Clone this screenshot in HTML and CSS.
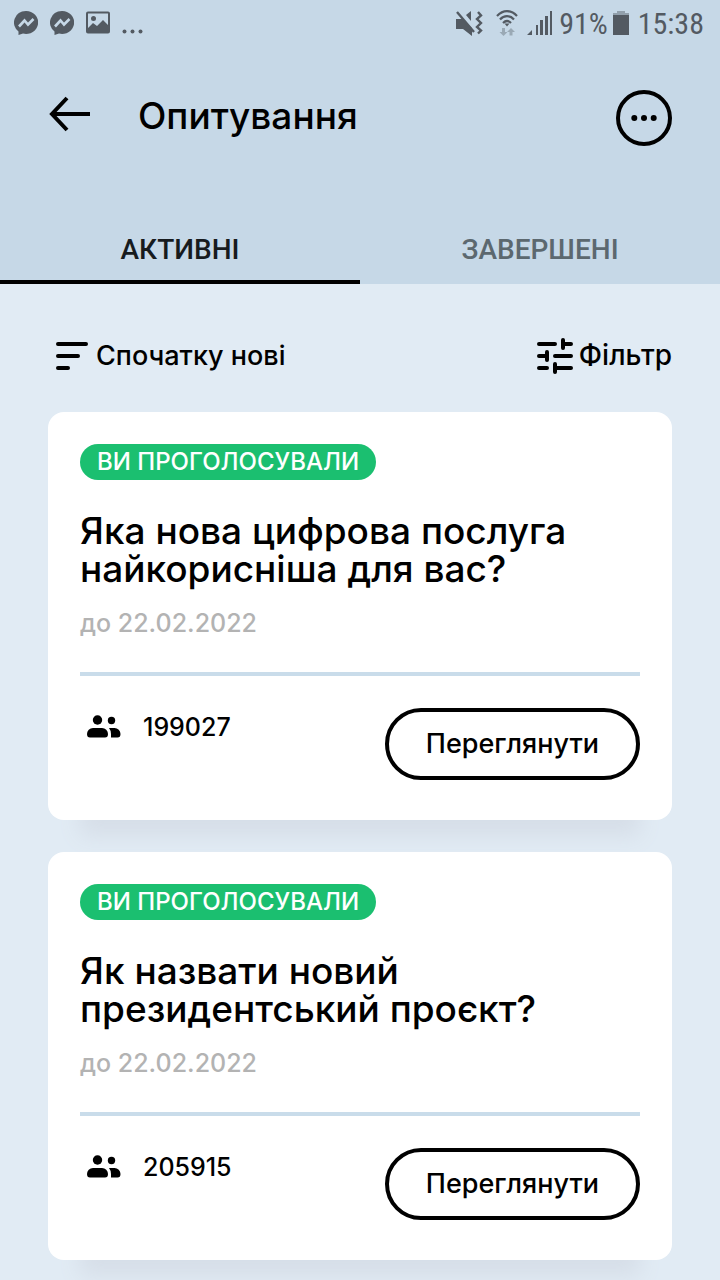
FILE: index.html
```html
<!DOCTYPE html>
<html lang="uk">
<head>
<meta charset="utf-8">
<meta name="viewport" content="width=device-width, initial-scale=1">
<title>Опитування</title>
<link rel="stylesheet" href="styles.css">
</head>
<body>
<div class="top">
  <div class="status">
    <div class="status-left">
      <svg width="24" height="24" viewBox="0 0 24 24"><path fill="currentColor" d="M12 0a12 11.500 0 1 1-3 22.600L4.500 24v-3.500A12 11.500 0 0 1 12 0z"/><path fill="none" stroke="#c6d8e7" stroke-width="2.600" d="M5 15.500l5.500-6 3.500 4 5.500-5.500"/></svg>
      <svg width="24" height="24" viewBox="0 0 24 24"><path fill="currentColor" d="M12 0a12 11.500 0 1 1-3 22.600L4.500 24v-3.500A12 11.500 0 0 1 12 0z"/><path fill="none" stroke="#c6d8e7" stroke-width="2.600" d="M5 15.500l5.500-6 3.500 4 5.500-5.500"/></svg>
      <svg width="24" height="24" viewBox="0 0 24 24"><rect x="1" y="1.500" width="22" height="20" rx="1" fill="none" stroke="currentColor" stroke-width="2"/><circle cx="7.500" cy="7.500" r="2.500" fill="currentColor"/><path fill="currentColor" d="M2 17l5-5 4 3 6-6 6 6v7H2z"/></svg>
      <svg width="24" height="24" viewBox="0 0 24 24"><circle cx="2.500" cy="20.500" r="2" fill="currentColor"/><circle cx="10.500" cy="20.500" r="2" fill="currentColor"/><circle cx="18.500" cy="20.500" r="2" fill="currentColor"/></svg>
    </div>
    <div class="status-right">
      <svg width="28" height="26" viewBox="0 0 28 26"><path fill="currentColor" d="M1 9h6l10 9v8l-9-7H1zM11 5l5-4v10z"/><path fill="none" stroke="currentColor" stroke-width="2.400" d="M2 2l17 20M23 2l3 3.500-4 3.500 4 4-4 4 4 3.500-3 3"/></svg>
      <svg class="wifi" width="24" height="26" viewBox="0 0 24 26"><path fill="none" stroke="currentColor" stroke-width="2.200" d="M2 6c6-6.500 14-6.500 20 0M5 9.500c4-4.500 10-4.500 14 0M8 13c2.500-2.500 5.500-2.500 8 0"/><path fill="currentColor" d="M9.500 13.500h5L12 16.500z"/><path fill="#9aa9b5" d="M7 18h3v4h2.500L8.500 26 4.500 22H7zM14.500 25.500h3V22H20l-4-4-4 4h2.500z"/></svg>
      <svg width="26" height="24" viewBox="0 0 26 24"><path fill="currentColor" d="M0 24l5-5v5zM9 14h2v10H9zM13 9h3v15h-3zM18 5h3v19h-3zM23 0h2v24h-2z"/></svg>
      <span>91%</span>
      <svg width="18" height="26" viewBox="0 0 18 26"><path fill="#92a0ac" d="M5 1h8v2h4v3H1V3h4z"/><path fill="currentColor" d="M1 5h16v20H1z"/></svg>
      <span>15:38</span>
    </div>
  </div>
  <header class="appbar">
    <button class="plain back" aria-label="Назад"><svg width="42" height="36" viewBox="0 0 42 36"><path fill="none" stroke="#000" stroke-width="4" d="M42 18H4M19 2L4 18l15 16"/></svg></button>
    <h1>Опитування</h1>
    <button class="plain more" aria-label="Меню"><svg width="56" height="56" viewBox="0 0 56 56"><circle cx="28" cy="28" r="26" fill="none" stroke="#000" stroke-width="4"/><circle cx="18.300" cy="28" r="3"/><circle cx="28" cy="28" r="3"/><circle cx="37.700" cy="28" r="3"/></svg></button>
  </header>
  <div class="tabs" role="tablist">
    <button class="tab active" role="tab" aria-selected="true">АКТИВНІ</button>
    <button class="tab" role="tab" aria-selected="false">ЗАВЕРШЕНІ</button>
  </div>
</div>
<main>
  <div class="tools">
    <button class="plain tool sort"><svg width="32" height="28" viewBox="0 0 32 28"><path stroke="#000" stroke-width="4" stroke-linecap="round" d="M2 2h28M2 14h20M2 26h10"/></svg><span>Спочатку нові</span></button>
    <button class="plain tool filter"><svg width="36" height="36" viewBox="0 0 36 36"><path stroke="#000" stroke-width="4" stroke-linecap="round" fill="none" d="M2 6h16M26 2v8M26 6h8M2 18h8M10 14v8M18 18h16M2 30h8M18 26v8M18 30h16"/></svg><span>Фільтр</span></button>
  </div>
  <article class="card">
    <span class="badge">ВИ ПРОГОЛОСУВАЛИ</span>
    <h2>Яка нова цифрова послуга найкорисніша для вас?</h2>
    <p class="date">до 22.02.2022</p>
    <div class="foot">
      <div class="votes"><svg width="34" height="24" viewBox="0 0 34 24"><circle cx="10.500" cy="5" r="4.700"/><circle cx="24.500" cy="5.500" r="3.700"/><path d="M6 13h9a6 6 0 0 1 6 6q0 3.500-3 3.500H3q-3 0-3-3.500a6 6 0 0 1 6-6zM22 13h5.500a6 6 0 0 1 6 6q0 3.500-3 3.500H24V19q0-3.500-2-6z"/></svg><span>199027</span></div>
      <button class="view">Переглянути</button>
    </div>
  </article>
  <article class="card">
    <span class="badge">ВИ ПРОГОЛОСУВАЛИ</span>
    <h2>Як назвати новий президентський проєкт?</h2>
    <p class="date">до 22.02.2022</p>
    <div class="foot">
      <div class="votes"><svg width="34" height="24" viewBox="0 0 34 24"><circle cx="10.500" cy="5" r="4.700"/><circle cx="24.500" cy="5.500" r="3.700"/><path d="M6 13h9a6 6 0 0 1 6 6q0 3.500-3 3.500H3q-3 0-3-3.500a6 6 0 0 1 6-6zM22 13h5.500a6 6 0 0 1 6 6q0 3.500-3 3.500H24V19q0-3.500-2-6z"/></svg><span>205915</span></div>
      <button class="view">Переглянути</button>
    </div>
  </article>
</main>
</body>
</html>
```
FILE: styles.css
```css
* { box-sizing: border-box; }
body { margin: 0; background: #e1ebf4; color: #000; font-family: Inter, "Noto Sans", sans-serif; font-weight: 500; }
svg { display: block; flex: none; }
h1, h2, p { margin: 0; font-weight: 500; }
button { font: inherit; color: inherit; cursor: pointer; }
.top { background: #c6d8e7; }
.status { display: flex; justify-content: space-between; align-items: center; height: 46px; padding: 0 16px 0 14px; color: #535a62; font-family: "Roboto Condensed", Roboto, sans-serif; font-size: 30px; font-weight: 400; }
.status-left { display: flex; gap: 12px; }
.status-right { display: flex; align-items: center; gap: 6px; }
.status-right svg:last-of-type { margin-left: -2px; margin-right: 2px; }
.wifi { margin: 0 2px 0 6px; }
.plain { border: 0; padding: 0; background: none; }
.appbar { display: flex; align-items: center; padding: 44px 48px 0; }
.back { padding-bottom: 8px; }
.appbar h1 { margin-left: 48px; padding-bottom: 4px; font-size: 37px; line-height: 44px; }
.more { margin-left: auto; }
.tabs { display: grid; grid-template-columns: 1fr 1fr; margin-top: 68px; font-family: Roboto, sans-serif; font-size: 28px; }
.tab { height: 70px; border: 0; border-bottom: 4px solid transparent; padding: 4px 0 0; background: none; color: #5c686f; }
.active { color: #171b1e; border-bottom-color: #000; }
main { display: flex; flex-direction: column; gap: 32px; padding: 52px 48px 20px; }
.tools { display: flex; justify-content: space-between; height: 44px; font-size: 27px; }
.tool { display: flex; align-items: center; gap: 6px; height: 40px; }
.tool span { padding-bottom: 2px; }
.sort { gap: 8px; padding-left: 8px; }
.filter { font-size: 28px; }
.card { padding: 32px 32px 40px; border-radius: 16px; background: #fff; box-shadow: 0 48px 20px -32px #d6dee8; }
.badge { display: block; width: fit-content; padding: 0 17px; border-radius: 18px; background: #1bbf70; color: #fff; font-size: 24px; line-height: 36px; }
.card h2 { margin-top: 32px; font-size: 37px; line-height: 38px; }
.date { margin-top: 17px; padding-bottom: 31px; border-bottom: 4px solid #c9dcea; color: #b3b3b3; font-size: 25px; line-height: 36px; }
.foot { display: flex; justify-content: space-between; align-items: flex-start; margin-top: 32px; font-size: 27px; }
.votes { display: flex; align-items: center; gap: 22px; height: 38px; padding-left: 7px; font-size: 25px; }
.view { height: 72px; padding: 0 37px 2px; border: 4px solid #000; border-radius: 36px; background: #fff; }
```
